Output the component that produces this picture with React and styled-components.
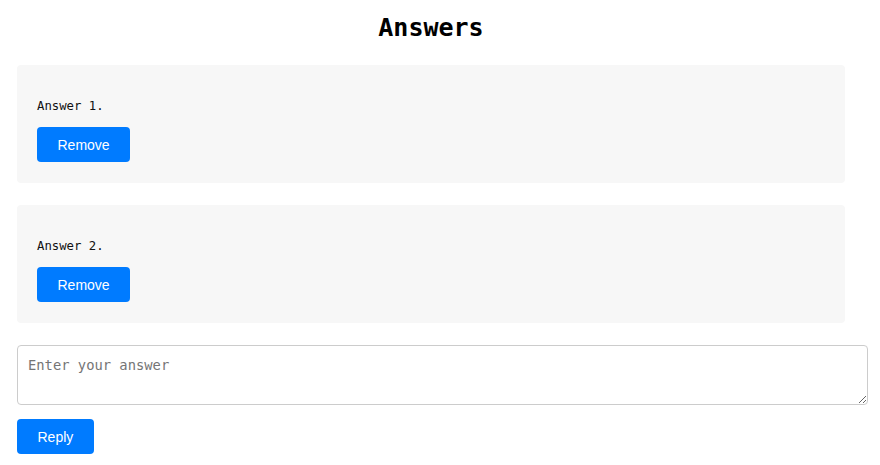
import React from "react"
import styled, { createGlobalStyle } from 'styled-components';

const GlobalStyle = createGlobalStyle`
  body {
    margin: 0;
    background: #fff;
  }
`

const answers = ['Answer 1.', 'Answer 2.']

const App = () => {
  return (
    <>
      <GlobalStyle />
      <Page>
        <Title>Answers</Title>
        {answers.map((text) => (
          <Card key={text}>
            <AnswerText>{text}</AnswerText>
            <Button>Remove</Button>
          </Card>
        ))}
        <Input placeholder="Enter your answer" />
        <Button>Reply</Button>
      </Page>
    </>
  )
}

export default App

const Page = styled.div`
  width: 828px;
  padding: 0 17px;
  display: flex;
  flex-direction: column;
  align-items: flex-start;
`

const Title = styled.h1`
  align-self: stretch;
  text-align: center;
  font-family: "DejaVu Sans Mono", monospace;
  font-size: 25px;
  font-weight: bold;
  color: #000;
  margin: 13px 0 23px;
  line-height: 29px;
`

const Card = styled.div`
  align-self: stretch;
  background: #f7f7f7;
  border-radius: 4px;
  padding: 20px 20px 21px;
  margin-bottom: 22px;
  display: flex;
  flex-direction: column;
  align-items: flex-start;
`

const AnswerText = styled.p`
  font-family: "DejaVu Sans Mono", monospace;
  font-size: 12.3px;
  line-height: 14px;
  color: #111;
  margin: 14px 0 14px;
`

const Button = styled.button`
  background: #007bff;
  color: #fff;
  border: none;
  border-radius: 4px;
  padding: 0 20.5px;
  height: 35px;
  font-family: "Liberation Sans", Arial, sans-serif;
  font-size: 14px;
  cursor: pointer;
`

const Input = styled.textarea`
  width: calc(100% + 1px);
  height: 38px;
  padding: 11px 10px 9px;
  border: 1px solid #ccc;
  border-radius: 4px;
  font-family: "DejaVu Sans Mono", monospace;
  font-size: 13.8px;
  margin: 0 0 14px;
  display: block;
`
